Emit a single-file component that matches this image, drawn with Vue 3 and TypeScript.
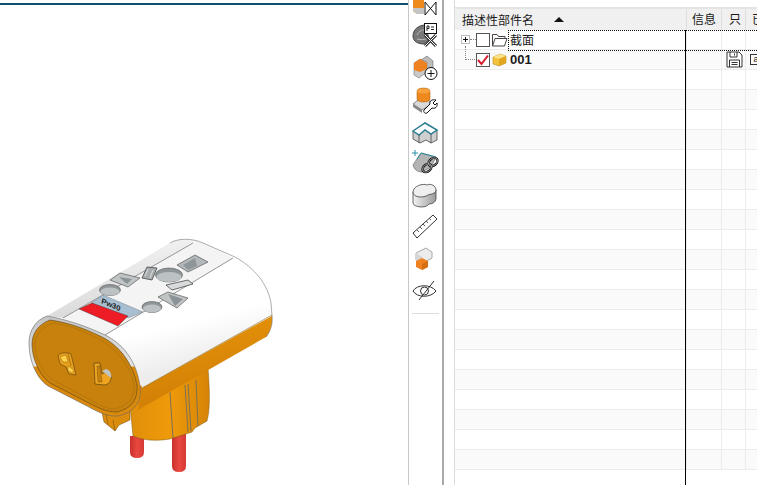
<script setup lang="ts">
const rows = Array.from({ length: 22 }, (_, i) => i)
</script>

<template>
  <div class="page">
    <div class="viewport">
      <div class="rule" />
      <svg class="model" viewBox="0 5 408 480" width="408" height="480">
        <defs>
          <linearGradient id="pin" x1="0" x2="1" y1="0" y2="0">
            <stop offset="0" stop-color="#c9302c" />
            <stop offset="0.5" stop-color="#e8483f" />
            <stop offset="1" stop-color="#d63a34" />
          </linearGradient>
          <linearGradient id="base" x1="0" x2="1" y1="0" y2="0">
            <stop offset="0" stop-color="#e08f0a" />
            <stop offset="0.5" stop-color="#ef9a0a" />
            <stop offset="1" stop-color="#d68407" />
          </linearGradient>
          <linearGradient id="under" x1="0" x2="0.25" y1="0" y2="1">
            <stop offset="0" stop-color="#e8950a" />
            <stop offset="1" stop-color="#d07f06" />
          </linearGradient>
          <linearGradient id="shell" x1="0.3" x2="0.62" y1="0" y2="0.85">
            <stop offset="0" stop-color="#e4e4e4" />
            <stop offset="0.3" stop-color="#fff" />
            <stop offset="0.7" stop-color="#fff" />
            <stop offset="1" stop-color="#ededed" />
          </linearGradient>
          <linearGradient id="ridge" x1="0.35" x2="0.55" y1="0" y2="1">
            <stop offset="0" stop-color="#f3f3f3" />
            <stop offset="1" stop-color="#d9d9d9" />
          </linearGradient>
          <linearGradient id="rim" x1="0" x2="0" y1="0" y2="1">
            <stop offset="0" stop-color="#c4c4c4" />
            <stop offset="0.5" stop-color="#e6e6e6" />
            <stop offset="0.51" stop-color="#d9890c" />
            <stop offset="1" stop-color="#d9890c" />
          </linearGradient>
          <linearGradient id="bean" x1="0" x2="1" y1="0" y2="0">
            <stop offset="0" stop-color="#f2f2f2" />
            <stop offset="1" stop-color="#9a9a9a" />
          </linearGradient>
        </defs>

        <!-- pins -->
        <path d="M130 436V452Q130 458 137 458Q144 458 144 452V436Z" fill="url(#pin)" />
        <path d="M172 430V466Q172 472 179 472Q186 472 186 466V430Z" fill="url(#pin)" />

        <!-- plug base and side tab -->
        <path d="M102 412L104 422L115 431L119 425L130 420V408Z" fill="#dc8c0c" stroke="#6a4a10" stroke-width=".5" />
        <path d="M113 420L115 431M106 414L108 425" stroke="#7a5512" stroke-width=".6" />
        <path d="M130 405L133 436C145 441 157 441 170 439L192 432L195 428L207 421C210 410 210 395 208 368Z" fill="url(#base)" stroke="#7d5a14" stroke-width=".5" />
        <path d="M170 392L173 438M185 385L188 432M188 384L191 431M196 380L198 426" stroke="#6d6d5e" stroke-width=".9" fill="none" />

        <!-- shell -->
        <path d="M140 386L272 314C273 325 270 332 266 337L138 410Z" fill="url(#under)" />
        <path d="M47 316L170 243C178 238 192 238 203 243L235 257C255 268 268 285 271 303L272 316L142 388C138 362 122 343 105 335Z" fill="url(#shell)" />
        <path d="M47 316L170 243C178 238 186 238 193 243L63 318Z" fill="url(#ridge)" />
        <path d="M63 318L193 243L203 243L233 258L105 335Z" fill="#f4f4f4" />
        <path d="M63 318L193 243M105 335L233 258" stroke="#555" stroke-width=".6" fill="none" />
        <path d="M170 243C178 238 192 238 203 243L235 257C255 268 268 285 271 303L272 316C273 325 270 332 266 337" stroke="#777" stroke-width=".6" fill="none" />
        <path d="M142 388L272 315" stroke="#8a6a20" stroke-width=".6" />

        <!-- top face cut-outs -->
        <path d="M177 265L195 255L208 262L188 272Z" fill="#b3b8ba" stroke="#444" stroke-width=".6" />
        <path d="M183 265L195 258L197 266L188 270Z" fill="#8f9699" />
        <path d="M142 278L147 267L157 268L152 280Z" fill="#a7adaf" stroke="#333" stroke-width=".7" />
        <path d="M145 276L148 269M150 278L153 270" stroke="#eee" stroke-width=".7" />
        <path d="M110 280L120 273L140 278L128 287Z" fill="#c0c4c5" stroke="#444" stroke-width=".6" />
        <path d="M119 277L132 279L127 284Z" fill="#8c9396" />
        <path d="M158 297L168 292L188 298L177 308Z" fill="#c0c4c5" stroke="#444" stroke-width=".6" />
        <path d="M168 294L175 306L183 299Z" fill="#8c9396" />
        <path d="M166 285L188 280L193 284L172 290Z" fill="#d8dbdc" stroke="#333" stroke-width=".7" />
        <ellipse cx="110" cy="290" rx="10.5" ry="5.5" fill="#8f9699" stroke="#555" stroke-width=".6" />
        <ellipse cx="110" cy="291.500" rx="9.500" ry="4" fill="#bcc1c3" />
        <ellipse cx="169" cy="275" rx="13.500" ry="7" fill="#8f9699" stroke="#555" stroke-width=".6" />
        <ellipse cx="169" cy="277" rx="12.500" ry="5" fill="#bcc1c3" />
        <ellipse cx="152" cy="307" rx="10" ry="5.500" fill="#8f9699" stroke="#555" stroke-width=".6" />
        <ellipse cx="152" cy="308.500" rx="9" ry="4" fill="#bcc1c3" />

        <!-- label and red block -->
        <path d="M91 303L103 295L143 312L128 318Z" fill="#a8bfd1" stroke="#667" stroke-width=".4" />
        <text class="mark" transform="matrix(.92 .4 -.2 .9 101 303)">Pw30</text>
        <path d="M79 309L92 303L128 316L118 326Z" fill="#ee1c25" stroke="#333" stroke-width=".4" />

        <!-- front face -->
        <path d="M47 316C70 320 90 328 105 335C122 343 136 360 140 385C142 400 136 412 118 416C105 417 95 410 85 405L48 386C36 378 29 360 29 343C29 330 36 320 47 316Z" fill="url(#rim)" stroke="#666" stroke-width=".6" />
        <path d="M50 320C72 323 90 331 104 338C119 346 133 363 137 385C138 398 133 408 117 412C105 412 97 407 87 402L50 383C39 375 32 358 32 344C32 333 39 324 50 320Z" fill="#c8810c" stroke="#5c4618" stroke-width=".6" />
        <path d="M53 323C74 326 90 334 102 341C116 349 130 365 134 385C135 396 130 405 115 409C105 409 98 404 89 399L53 380C42 372 35 357 35 345C35 335 42 327 53 323Z" fill="#c8810c" stroke="#96680f" stroke-width=".4" />

        <!-- sockets -->
        <path d="M58 356C60 352 65 353 68 353L71 354L76 375L69 374L66 367L60 364Z" fill="#e99f1c" stroke="#6a4a10" stroke-width=".7" />
        <path d="M60 357L66 355L68 362L63 362ZM68 366L74 370L72 373L68 371Z" fill="#ffd04a" stroke="#7b5a12" stroke-width=".4" />
        <path d="M68 354L71 366" stroke="#7b5a12" stroke-width=".6" />
        <path d="M94 363L100 363L102 374L106 372L111 376C112 381 108 385 104 385L95 384Z" fill="#eea420" stroke="#5a4010" stroke-width=".7" />
        <path d="M102 371L106 369C110 370 112 374 111 378L106 374Z" fill="#bfc3c5" />
        <path d="M97 366L98 382L102 382L100 366Z" fill="#c8810c" stroke="#6a4a10" stroke-width=".4" />
      </svg>
    </div>

    <div class="toolbar">
      <svg viewBox="410 0 34 22" width="34" height="22">
        <path d="M414 -2H425V14H418L414 11Z" fill="#ee8a1d" />
        <path d="M414 8H425V14H418L414 11Z" fill="#c4c4c4" />
        <path d="M426 3V15H437V3Z" fill="#fff" />
        <path d="M426 2L437 15M437 2L426 15M426 2V15M437 2V15" stroke="#111" stroke-width="1" fill="none" />
      </svg>
      <svg viewBox="410 22 34 30" width="34" height="30">
        <path d="M414 36C414 29 420 25 427 25L430 40L425 44C420 44 414 42 414 36Z" fill="#777" stroke="#444" />
        <path d="M418 35C420 31 424 29 428 30M418 39C422 40 426 40 428 38" stroke="#bbb" fill="none" />
        <rect x="425.500" y="23.500" width="12" height="10" fill="#fff" stroke="#111" />
        <path d="M428 26V31M428 26H430V28.500H428M432 27H435M432 29.500H435" stroke="#111" fill="none" stroke-width=".9" />
        <path d="M426 35L437 46M437 35L426 46" stroke="#333" stroke-width="3" />
        <path d="M426 35L437 46M437 35L426 46" stroke="#fff" stroke-width="1" />
      </svg>
      <svg viewBox="410 52 34 32" width="34" height="32">
        <path d="M422 60L428 56L434 61V68L428 72L422 68Z" fill="#bcbcbc" stroke="#666" stroke-width=".6" />
        <path d="M415 63L421 59L428 62V72L420 78L415 75Z" fill="#c9c9c9" stroke="#777" stroke-width=".6" />
        <path d="M415 63L421 59L428 63V69L421 72L415 70Z" fill="#ee8220" />
        <circle cx="432" cy="73.500" r="6" fill="#fff" stroke="#111" />
        <path d="M428.500 73.500H435.500M432 70V77" stroke="#111" />
      </svg>
      <svg viewBox="410 84 34 32" width="34" height="32">
        <path d="M414 104L423 97L434 103L423 110Z" fill="#d9d9d9" stroke="#555" stroke-width=".7" />
        <path d="M414 104V107L423 113V110Z" fill="#888" />
        <path d="M418 91C418 87 431 87 431 91V99C431 103 418 103 418 99Z" fill="#ee8a1d" stroke="#a55c10" stroke-width=".5" />
        <ellipse cx="424.500" cy="91" rx="6.500" ry="2.500" fill="#f7a23d" />
        <path d="M425 110L431 104C430 101 433 99 437 100L434 103L436 105L438 103C439 107 436 109 433 108L428 113C426 114 424 112 425 110Z" fill="#fff" stroke="#111" />
      </svg>
      <svg viewBox="410 116 34 32" width="34" height="32">
        <path d="M414 131L426 123L438 130V140L432 143L427 140L421 143L414 139Z" fill="#cfcfcf" stroke="#444" stroke-width=".8" />
        <path d="M414 131L426 123L438 130L432 134L426 130L420 135Z" fill="#fff" stroke="#2b7f93" stroke-width="1.500" />
        <path d="M420 135V143M432 134V143" stroke="#444" stroke-width=".8" />
      </svg>
      <svg viewBox="410 148 34 33" width="34" height="33">
        <path d="M414 165L422 153L437 157L432 167L423 172C418 172 415 169 414 165Z" fill="#b4b4b4" stroke="#555" stroke-width=".6" />
        <path d="M418 159L422 153L437 157" stroke="#2b8fa6" fill="none" />
        <path d="M413 153H419M416 150V156" stroke="#2b8fa6" />
        <g fill="none">
          <ellipse cx="428" cy="168" rx="5" ry="3.500" transform="rotate(-38 428 168)" stroke="#111" stroke-width="2.400" />
          <ellipse cx="434" cy="162" rx="5" ry="3.500" transform="rotate(-38 434 162)" stroke="#111" stroke-width="2.400" />
          <ellipse cx="428" cy="168" rx="5" ry="3.500" transform="rotate(-38 428 168)" stroke="#ddd" stroke-width=".6" />
          <ellipse cx="434" cy="162" rx="5" ry="3.500" transform="rotate(-38 434 162)" stroke="#ddd" stroke-width=".6" />
        </g>
      </svg>
      <svg viewBox="410 181 34 32" width="34" height="32">
        <path d="M414 192V203C414 207 427 209 430 204C432 204 437 203 437 198V190Z" fill="url(#bean)" stroke="#444" stroke-width=".8" />
        <path d="M414 192C414 186 424 183 428 185C432 183 437 186 437 190C437 194 431 194 429 195C425 198 414 198 414 192Z" fill="#efefef" stroke="#444" stroke-width=".8" />
      </svg>
      <svg viewBox="410 213 34 31" width="34" height="31">
        <path d="M414 233L434 215L438 219L418 238Z" fill="#fff" stroke="#333" />
        <path d="M418 230L420 232M421 227L423 229M424 224L426 226M427 221L429 223M430 218L432 220" stroke="#333" stroke-width=".8" />
      </svg>
      <svg viewBox="410 244 34 32" width="34" height="32">
        <path d="M417 253L427 248L433 252V258L428 261L417 260Z" fill="#ececec" stroke="#aaa" />
        <path d="M417 253L423 257V263L417 260Z" fill="#d5d5d5" />
        <path d="M417 261L423 258L429 261V267L423 270L417 267Z" fill="#ee8220" />
        <path d="M423 264V270L429 267V261Z" fill="#d56f12" />
      </svg>
      <svg viewBox="410 276 34 30" width="34" height="30">
        <path d="M414 291C418 284 432 284 437 291C432 298 418 298 414 291Z" fill="none" stroke="#333" />
        <circle cx="425.500" cy="291" r="4" fill="none" stroke="#333" />
        <path d="M420 300L435 281" stroke="#333" />
      </svg>
      <div class="separator" />
    </div>

    <div class="tree">
      <div class="tree-head">
        <div class="th name">描述性部件名<span class="sort" /></div>
        <div class="th info">信息</div>
        <div class="th only">只</div>
        <div class="th last">已</div>
      </div>
      <div class="tree-body">
        <div v-for="i in rows" :key="i" class="row" :class="{ alt: i % 2 === 1 }">
          <div class="cell name">
            <template v-if="i === 0">
              <span class="expander" />
              <span class="dash" />
              <span class="check" />
              <svg class="node-icon" viewBox="0 0 17 14" width="17" height="14">
                <path d="M1.500 13V1.500H6L7.500 3.500H14V5.500M1.500 13L4 5.500H16L13.500 13Z" fill="#fff" stroke="#444" />
              </svg>
              <span class="label">截面</span>
            </template>
            <template v-if="i === 1">
              <span class="elbow" />
              <span class="check indented">
                <svg viewBox="0 0 14 14" width="14" height="14">
                  <path d="M2 7L5.500 11L12 2.500" fill="none" stroke="#d8182c" stroke-width="2" />
                </svg>
              </span>
              <svg class="node-icon" viewBox="0 0 17 14" width="17" height="14">
                <path d="M2 4L9 1L15 3V10L8 13L2 11Z" fill="#f3c13c" stroke="#b8912e" stroke-width=".6" />
                <path d="M2 4L8 6L15 3L9 1Z" fill="#fbe38a" />
                <path d="M8 6V13L15 10V3Z" fill="#e2a520" />
              </svg>
              <span class="label strong">001</span>
            </template>
          </div>
          <div class="cell info" />
          <div class="cell only">
            <svg v-if="i === 1" viewBox="0 0 17 17" width="17" height="17">
              <path d="M1 1H13L16 4V16H1Z" fill="#fff" stroke="#333" />
              <path d="M4 1V6H11V1M8.500 2.500V4.500M3.500 16V9H13.500V16M5.500 11.500H11.500M5.500 13.500H11.500" fill="none" stroke="#333" />
            </svg>
          </div>
          <div class="cell last">
            <span v-if="i === 1" class="doc">a</span>
          </div>
        </div>
      </div>
      <div class="cursor-line" />
      <div class="focus-box" />
    </div>
  </div>
</template>

<style>
html,
body {
  margin: 0;
  background: #fff;
  overflow: hidden;
}
</style>

<style scoped>
.page {
  display: flex;
  width: 757px;
  height: 485px;
  overflow: hidden;
  background: #fff;
  font-family: "Noto Sans CJK SC", "Liberation Sans", sans-serif;
  color: #1a1a1a;
}

.viewport {
  width: 408px;
  flex: none;
  padding-top: 3px;
  box-sizing: border-box;
}

.rule {
  height: 2px;
  background: #0d4f6e;
}

.model {
  display: block;
}

.mark {
  font: bold 8px "Liberation Sans", sans-serif;
  fill: #222;
}

.toolbar {
  width: 36px;
  height: 485px;
  flex: none;
  box-sizing: border-box;
  border-left: 1px solid #c8c8c8;
  border-right: 2px solid #a9a9a9;
  display: flex;
  flex-direction: column;
}

.toolbar svg {
  display: block;
  flex: none;
  overflow: hidden;
}

.separator {
  height: 1px;
  margin: 7px 3px 0;
  background: #ddd;
}

.tree {
  position: relative;
  margin-left: 10px;
  flex: 1;
  min-width: 0;
  padding-top: 7px;
  border-left: 1px solid #dcdcdc;
  overflow: hidden;
}

.tree-head {
  display: flex;
  height: 23px;
  box-sizing: border-box;
  border-top: 2px solid #e4e4e4;
  background: #f0f0f0;
  font-size: 12px;
  line-height: 20px;
}

.th {
  box-sizing: border-box;
  white-space: nowrap;
  overflow: hidden;
}

.name {
  width: 231px;
  flex: none;
}

.info {
  width: 35px;
  flex: none;
}

.only {
  width: 24px;
  flex: none;
}

.last {
  flex: 1;
  min-width: 0;
  overflow: hidden;
}

.th.name {
  padding-left: 7px;
  display: flex;
  align-items: center;
}

.sort {
  width: 0;
  height: 0;
  margin-left: 20px;
  border-left: 5px solid transparent;
  border-right: 5px solid transparent;
  border-bottom: 5px solid #111;
}

.th.info {
  padding-left: 5px;
  border-left: 1px solid #dedede;
}

.th.only {
  padding-left: 7px;
  border-left: 1px solid #dedede;
}

.th.last {
  padding-left: 6px;
  border-left: 1px solid #dedede;
}

.row {
  display: flex;
  height: 20px;
  box-sizing: border-box;
  border-bottom: 1px solid #ececec;
}

.row.alt {
  background: #fafafa;
}

.cell {
  height: 19px;
  box-sizing: border-box;
  display: flex;
  align-items: center;
}

.cell.info,
.cell.only,
.cell.last {
  border-left: 1px solid #ececec;
}

.cell.only {
  padding-left: 4px;
}

.cell.name {
  padding-left: 6px;
  position: relative;
}

.expander {
  width: 9px;
  height: 9px;
  flex: none;
  box-sizing: border-box;
  border: 1px solid #bbb;
  background:
    linear-gradient(#111, #111) center / 5px 1px no-repeat,
    linear-gradient(#111, #111) center / 1px 5px no-repeat,
    #fff;
}

.dash {
  width: 6px;
  flex: none;
  border-top: 1px dotted #888;
}

.elbow {
  position: absolute;
  left: 10px;
  top: -4px;
  width: 11px;
  height: 13px;
  border-left: 1px dotted #888;
  border-bottom: 1px dotted #888;
}

.check {
  width: 14px;
  height: 14px;
  flex: none;
  box-sizing: border-box;
  border: 1px solid #555;
  background: #fff;
  position: relative;
  overflow: hidden;
}

.indented {
  margin-left: 15px;
}

.check svg {
  display: block;
  margin: -1px;
}

.node-icon {
  flex: none;
  margin-left: 1px;
}

.label {
  margin-left: 2px;
  font-size: 12px;
  white-space: nowrap;
}

.strong {
  font: bold 13px "Liberation Sans", sans-serif;
}

.doc {
  display: block;
  flex: none;
  width: 12px;
  height: 11px;
  margin-left: 4px;
  box-sizing: border-box;
  border: 1px solid #333;
  font: 9px/9px "Liberation Sans", sans-serif;
  text-align: center;
}

.cursor-line {
  position: absolute;
  left: 230px;
  top: 30px;
  bottom: 0;
  width: 1px;
  background: #000;
}

.focus-box {
  position: absolute;
  left: 53px;
  right: -4px;
  top: 30px;
  height: 19px;
  border: 1px dotted #111;
  pointer-events: none;
}
</style>
